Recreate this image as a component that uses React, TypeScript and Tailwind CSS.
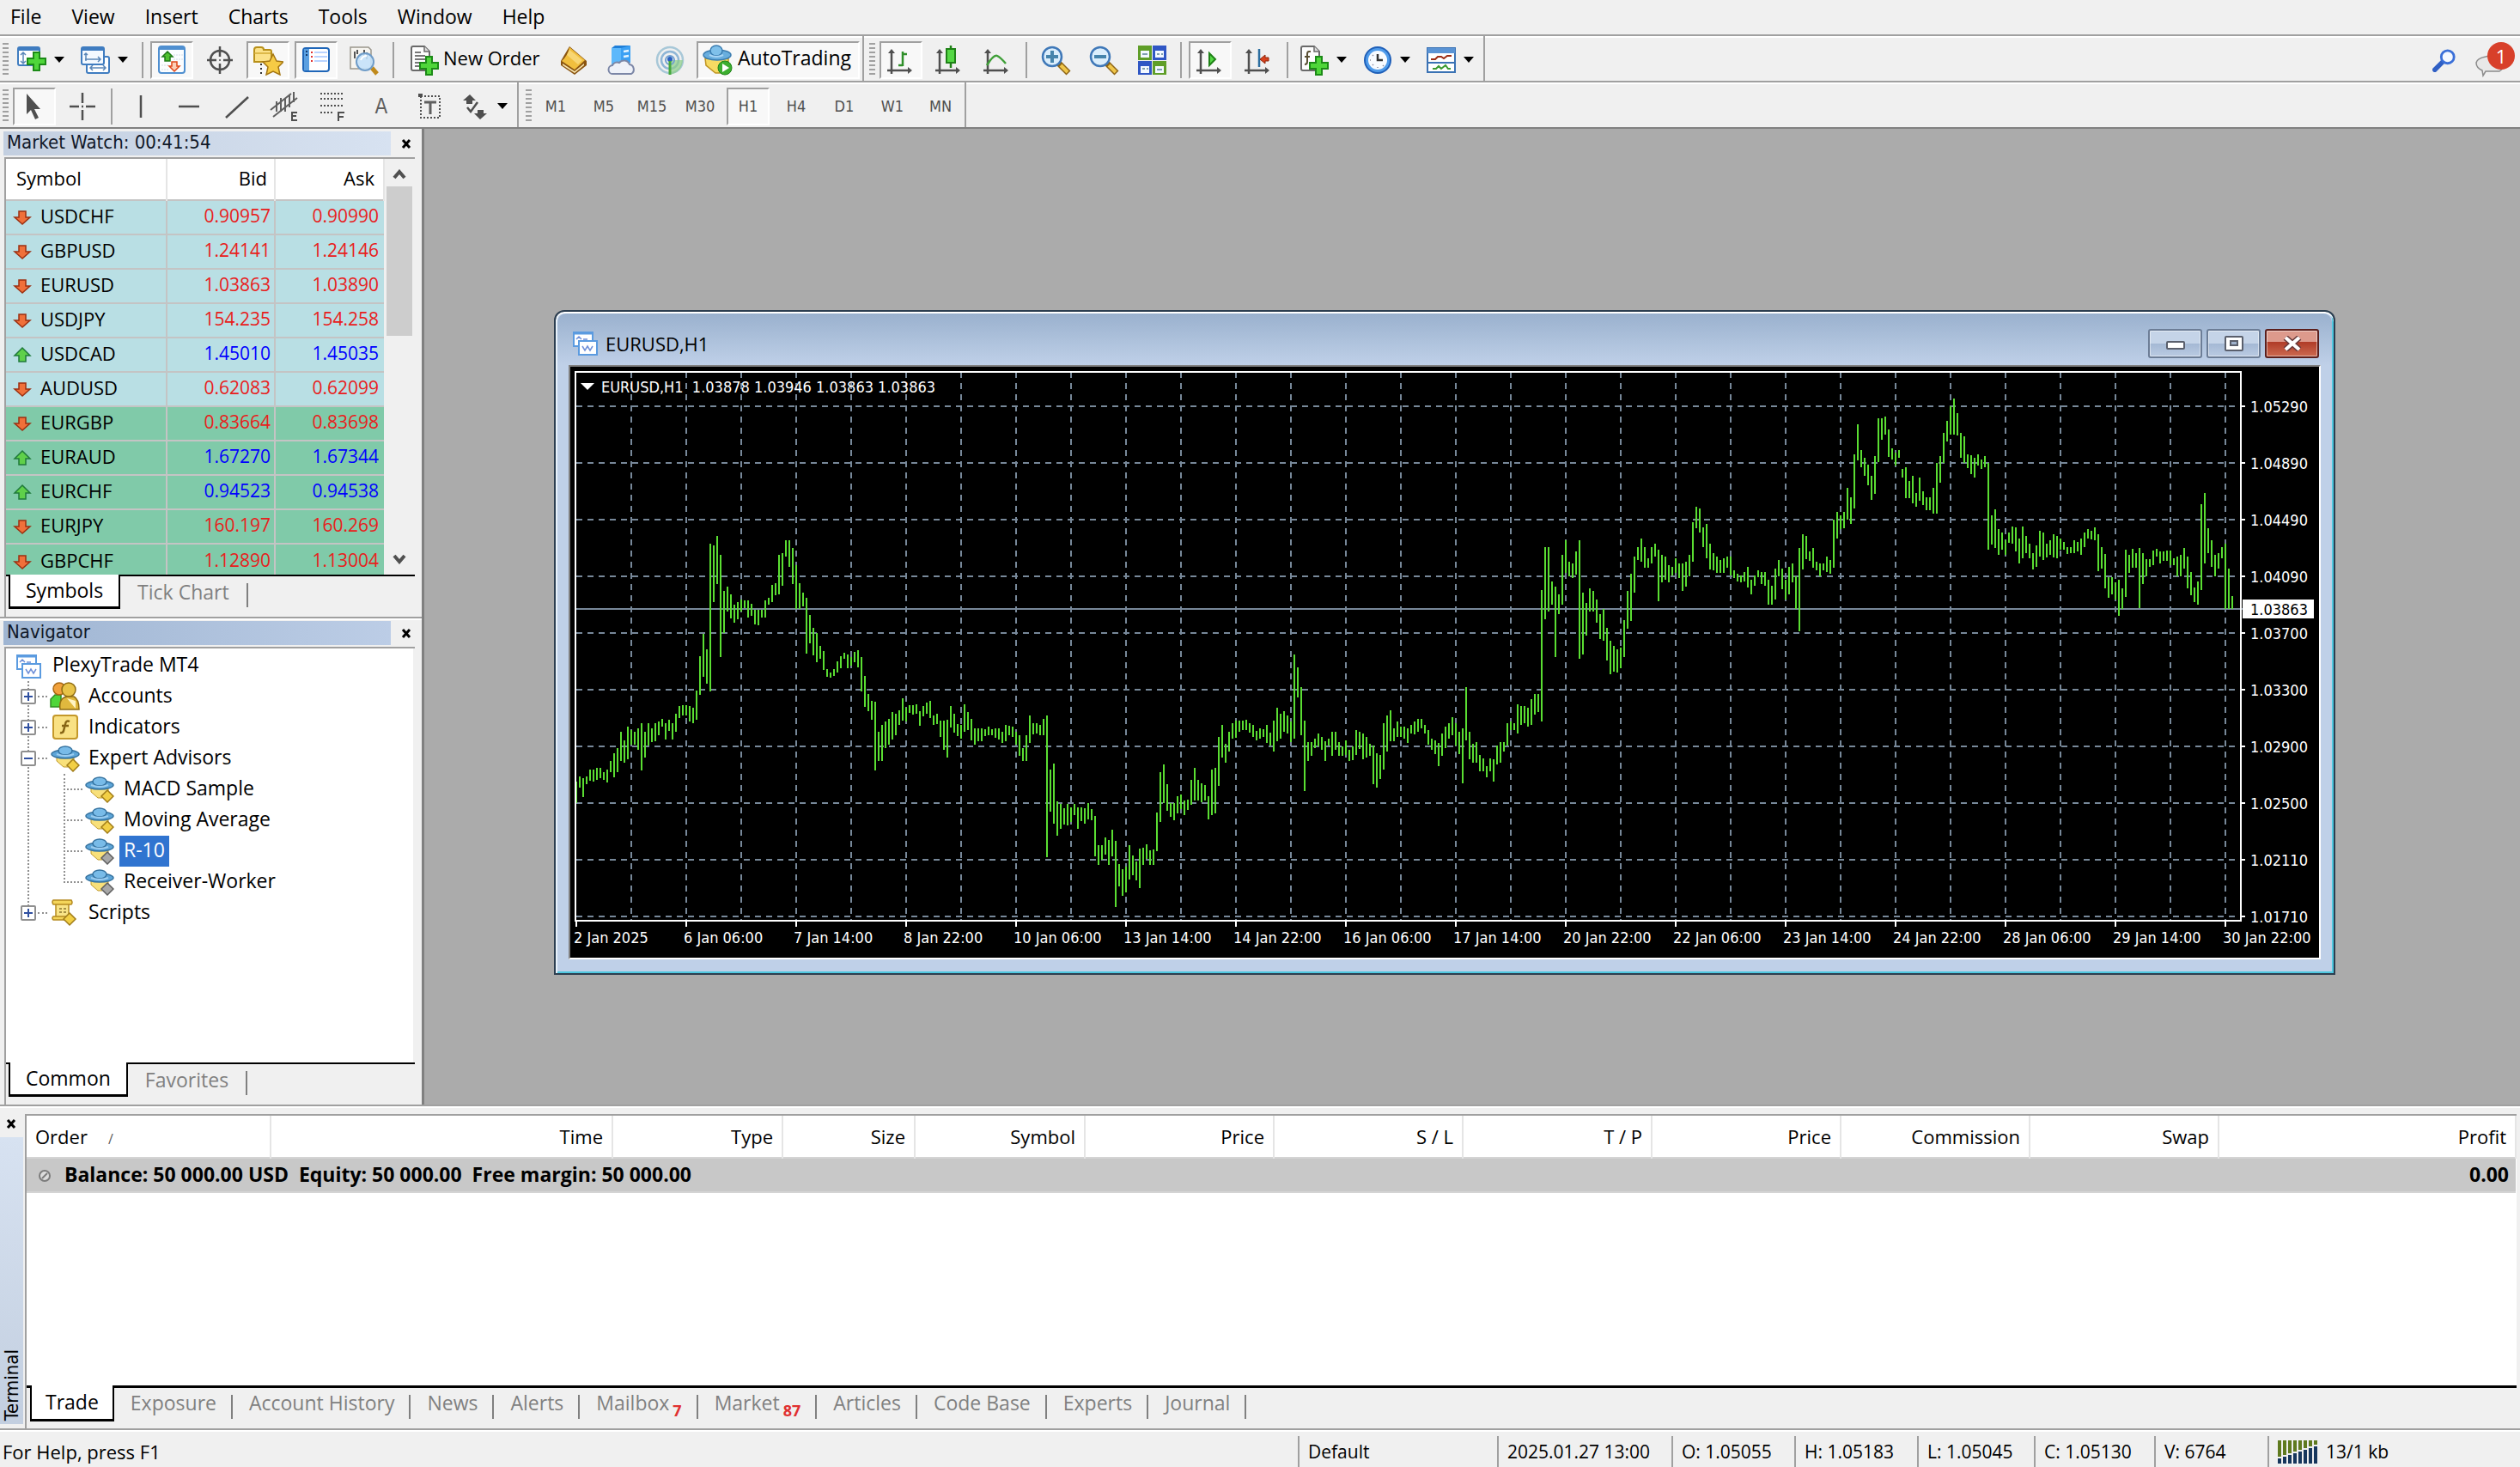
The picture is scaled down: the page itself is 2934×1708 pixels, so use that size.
import type { ReactNode } from "react";

const ui = "font-['Open_Sans','Noto_Sans',sans-serif]";
const small = "font-['DejaVu_Sans_Condensed','Noto_Sans',sans-serif]";

/* ---------- data ---------- */

const menu = ["File", "View", "Insert", "Charts", "Tools", "Window", "Help"];

const timeframes = ["M1", "M5", "M15", "M30", "H1", "H4", "D1", "W1", "MN"];

const symbols = [
  { name: "USDCHF", bid: "0.90957", ask: "0.90990", up: false, major: true },
  { name: "GBPUSD", bid: "1.24141", ask: "1.24146", up: false, major: true },
  { name: "EURUSD", bid: "1.03863", ask: "1.03890", up: false, major: true },
  { name: "USDJPY", bid: "154.235", ask: "154.258", up: false, major: true },
  { name: "USDCAD", bid: "1.45010", ask: "1.45035", up: true, major: true },
  { name: "AUDUSD", bid: "0.62083", ask: "0.62099", up: false, major: true },
  { name: "EURGBP", bid: "0.83664", ask: "0.83698", up: false, major: false },
  { name: "EURAUD", bid: "1.67270", ask: "1.67344", up: true, major: false },
  { name: "EURCHF", bid: "0.94523", ask: "0.94538", up: true, major: false },
  { name: "EURJPY", bid: "160.197", ask: "160.269", up: false, major: false },
  { name: "GBPCHF", bid: "1.12890", ask: "1.13004", up: false, major: false },
];

const orderColumns = [
  { label: "Order", width: "w-[284px]" },
  { label: "Time", width: "w-[398px]" },
  { label: "Type", width: "w-[198px]" },
  { label: "Size", width: "w-[154px]" },
  { label: "Symbol", width: "w-[198px]" },
  { label: "Price", width: "w-[220px]" },
  { label: "S / L", width: "w-[220px]" },
  { label: "T / P", width: "w-[220px]" },
  { label: "Price", width: "w-[220px]" },
  { label: "Commission", width: "w-[220px]" },
  { label: "Swap", width: "w-[220px]" },
  { label: "Profit", width: "" },
];

const terminalTabs = [
  { label: "Exposure" },
  { label: "Account History" },
  { label: "News" },
  { label: "Alerts" },
  { label: "Mailbox", count: "7" },
  { label: "Market", count: "87" },
  { label: "Articles" },
  { label: "Code Base" },
  { label: "Experts" },
  { label: "Journal" },
];

const status = [
  { label: "Default", width: "w-[232px]" },
  { label: "2025.01.27 13:00", width: "w-[203px]" },
  { label: "O: 1.05055", width: "w-[143px]" },
  { label: "H: 1.05183", width: "w-[143px]" },
  { label: "L: 1.05045", width: "w-[136px]" },
  { label: "C: 1.05130", width: "w-[140px]" },
  { label: "V: 6764", width: "w-[132px]" },
];

const prices = [
  "1.05290", "1.04890", "1.04490", "1.04090", "1.03700",
  "1.03300", "1.02900", "1.02500", "1.02110", "1.01710",
];

const dates = [
  "2 Jan 2025", "6 Jan 06:00", "7 Jan 14:00", "8 Jan 22:00",
  "10 Jan 06:00", "13 Jan 14:00", "14 Jan 22:00", "16 Jan 06:00",
  "17 Jan 14:00", "20 Jan 22:00", "22 Jan 06:00", "23 Jan 14:00",
  "24 Jan 22:00", "28 Jan 06:00", "29 Jan 14:00", "30 Jan 22:00",
];

const TICKS_PER_PX = 1.96;
const bars = `
1096-1145 1084-1110 1088-1130 1084-1102 1068-1094 1068-1096 1064-1092 1064-1088 1074-1092 1068-1098
1048-1074 1030-1086 1020-1074 982-1048 1002-1052 970-1044 978-1012 982-1012 974-1024 962-1070
982-1040 962-1014 974-1006 962-1004 958-990 952-970 962-1000 954-980 962-1000 940-982
924-950 922-944 922-944 924-958 928-962 888-954 810-898 758-856 794-872 552-890
556-686 536-644 578-812 660-756 650-708 668-724 692-734 686-726 680-708 682-700
682-722 690-718 704-736 704-738 704-722 682-722 676-692 646-686 642-670 578-668
574-648 544-582 544-606 562-644 602-702 642-702 664-696 676-804 716-780 744-808
756-824 786-816 798-840 838-856 846-858 838-854 822-846 810-836 802-816 806-836
812-832 800-824 796-834 812-890 854-926 896-934 912-954 914-1070 982-1048 966-1048
958-1020 952-1012 936-1000 940-990 932-966 906-956 928-958 922-938 922-942 920-940
934-968 924-946 916-940 912-950 944-966 940-964 956-994 956-1024 954-1040 924-972
940-984 964-992 966-998 920-982 936-978 952-1002 974-1012 974-1004 974-1004 976-992
970-990 976-990 974-996 974-1000 982-1008 966-1004 968-990 970-994 982-1012 990-1036
1020-1048 990-1048 944-1008 962-988 962-986 966-990 952-990 944-1268 1068-1164 1054-1192
1140-1220 1146-1204 1156-1194 1146-1196 1154-1188 1146-1172 1154-1204 1154-1186 1156-1192 1144-1182
1158-1184 1174-1266 1240-1286 1240-1274 1224-1262 1228-1286 1206-1266 1230-1382 1284-1334 1296-1356
1290-1348 1240-1320 1264-1310 1278-1322 1248-1338 1246-1286 1238-1272 1252-1286 1250-1286 1166-1254
1074-1188 1056-1144 1102-1162 1144-1176 1144-1184 1128-1168 1126-1158 1138-1172 1136-1160 1092-1148
1064-1138 1092-1138 1100-1142 1104-1138 1128-1182 1068-1172 1064-1168 994-1106 966-1040 1010-1052
982-1028 962-998 956-996 956-982 956-978 954-978 962-984 966-994 980-1002 974-998
976-994 966-1008 984-1014 956-1028 928-1004 940-998 934-982 944-986 958-1006 806-998
834-904 880-990 956-1118 1006-1048 1006-1036 998-1020 986-1016 994-1024 1004-1048 998-1014
982-1036 982-1024 1006-1036 1016-1036 1002-1034 1024-1048 1016-1046 978-1034 982-1022 986-1044
994-1040 1010-1036 1014-1102 1030-1110 1034-1090 962-1068 944-1028 932-1004 974-1004 958-994
970-994 970-998 974-1008 966-986 958-988 952-982 952-974 966-986 978-1012 998-1024
1002-1032 1008-1060 986-1036 970-1020 962-998 948-990 962-1014 982-1032 974-1100 880-1002
982-1044 1010-1052 1006-1052 1034-1072 1042-1072 1060-1086 1042-1072 1044-1096 1014-1056 1006-1052
1006-1028 962-1014 958-978 962-978 920-986 924-966 924-962 928-970 908-966 896-942
896-936 658-958 560-726 560-708 638-692 650-812 668-714 578-692 544-620 594-628
598-632 570-624 544-816 664-806 688-762 654-708 660-708 680-734 714-770 702-774
744-820 774-850 786-844 794-846 790-836 728-812 660-746 622-730 582-664 560-590
540-594 560-608 586-608 560-598 552-582 566-684 578-640 582-636 602-640 606-626
586-620 598-632 598-660 594-650 578-628 504-594 468-518 472-528 516-560 508-586
552-612 574-614 582-620 590-620 586-620 582-608 582-626 614-632 622-638 626-640
618-638 606-652 636-668 626-648 614-630 618-644 618-648 636-692 648-692 610-680
590-628 610-656 636-680 606-668 598-640 628-702 562-752 532-612 536-588 570-592
562-608 594-614 598-628 598-614 582-618 590-622 498-608 480-540 488-520 480-518
426-498 446-508 348-472 280-362 340-378 356-398 372-420 398-452 352-440 266-366
266-316 262-304 292-354 336-360 344-374 340-356 382-402 378-448 410-448 398-460
438-468 402-454 434-464 446-476 446-476 426-484 368-484 352-414 300-368 272-320
240-304 222-304 254-306 300-356 308-368 348-380 350-394 356-402 348-374 360-382
352-378 368-566 488-554 474-562 520-578 528-566 544-578 528-550 514-552 516-570
540-598 514-586 536-574 552-586 574-612 556-606 524-582 528-590 552-584 544-578
532-584 536-586 540-566 548-566 560-576 560-574 544-574 548-570 540-578 528-560
520-540 524-542 516-544 532-616 560-610 576-654 630-676 630-668 640-680 636-718
654-702 566-674 578-620 564-608 574-608 562-700 574-644 588-628 588-606 568-602
564-582 570-598 570-592 568-592 568-602 586-602 582-628 578-628 562-610 582-654
618-670 652-686 638-692 462-658 438-598 518-574 544-606 578-628 574-610 560-586
552-702 610-702 672-702`
  .trim()
  .split(/\s+/)
  .map((bar) => bar.split("-").map((v) => Math.round(Number(v) / TICKS_PER_PX - 76)));

/* ---------- icons ---------- */

const Icon = ({ children }: { children: ReactNode }) => (
  <svg width="36" height="36" viewBox="0 0 36 36" fill="none" aria-hidden="true">
    {children}
  </svg>
);

const Plus = ({ x, y }: { x: number; y: number }) => (
  <path
    transform={`translate(${x} ${y})`}
    d="M8 1h7v7h7v7h-7v7H8v-7H1V8h7z"
    fill="#4fd63a"
    stroke="#1c8a17"
    strokeWidth="2"
  />
);

const NewChartIcon = () => (
  <Icon>
    <rect x="2" y="3" width="25" height="21" rx="2" fill="#fff" stroke="#3f7cc0" strokeWidth="2" />
    <path d="M2 3h25v4H2z" fill="#3f7cc0" />
    <path d="M8 10v11M5 12l3-3 3 3M5 19l3 3 3-3M13 20h6" stroke="#5b87b8" strokeWidth="1.5" />
    <Plus x={12} y={8} />
  </Icon>
);

const ProfilesIcon = () => (
  <Icon>
    <rect x="8" y="14" width="26" height="19" rx="2" fill="#fff" stroke="#3f7cc0" strokeWidth="2" />
    <path d="M12 27h18M15 24l-3 3 3 3M27 24l3 3-3 3" stroke="#5b87b8" strokeWidth="1.5" />
    <rect x="2" y="3" width="26" height="20" rx="2" fill="#f4f9ff" stroke="#3f7cc0" strokeWidth="2" />
    <path d="M2 3h26v4H2z" fill="#3f7cc0" />
    <path d="M7 10v9M6 17h18M21 14l3 3-3 3M5 12l2-2 2 2" stroke="#5b87b8" strokeWidth="1.5" />
  </Icon>
);

const MarketWatchIcon = () => (
  <Icon>
    <rect x="3" y="2" width="30" height="31" rx="3" fill="#fbfdff" stroke="#4f8fd0" strokeWidth="2" />
    <path d="M4 3h28v3H4z" fill="#4f8fd0" />
    <path d="M20 12h11M20 17h11M6 24h9M6 29h9" stroke="#d5dce6" strokeWidth="1" strokeDasharray="2 1" />
    <path d="M13 8l6 6h-3v5h-6v-5H7z" fill="#4fc02f" stroke="#1f7a17" strokeWidth="1.5" />
    <path d="M21 31l6-6h-3v-5h-6v5h-3z" fill="#fbd0b8" stroke="#e0481a" strokeWidth="1.5" />
  </Icon>
);

const DataWindowIcon = () => (
  <Icon>
    <circle cx="18" cy="18" r="11" stroke="#4f4f4f" strokeWidth="2.5" />
    <path d="M18 2v12M18 22v12M3 18h11M22 18h11" stroke="#4f4f4f" strokeWidth="2.5" />
    <circle cx="18" cy="18" r="1" fill="#4f4f4f" />
  </Icon>
);

const FavoritesIcon = () => (
  <Icon>
    <path d="M2 20V6q0-3 3-3h5q3 0 3 3h7q2 0 2 2v12z" fill="#fbe289" stroke="#b8901a" strokeWidth="2" />
    <path d="M2 10h19" stroke="#d2ab35" strokeWidth="1.5" />
    <path d="M10 22v12" stroke="#333" strokeWidth="2" strokeDasharray="2 3" />
    <path d="M24 11l4 8 8 1-6 6 2 9-8-4-8 4 2-9-6-6 8-1z" fill="#f6cb45" stroke="#a47612" strokeWidth="1.5" />
  </Icon>
);

const NavigatorIcon = () => (
  <Icon>
    <rect x="3" y="4" width="30" height="27" rx="3" fill="#fff" stroke="#1f66b8" strokeWidth="2" />
    <path d="M4 5h6v25H4z" fill="#5a9fe0" />
    <path d="M6 8h2M6 12h2" stroke="#123a70" strokeWidth="2" />
    <path d="M13 8v13" stroke="#e03030" strokeWidth="2" strokeDasharray="2 3" />
    <path d="M16 9h15M16 14h15M16 19h15" stroke="#b9d3ff" strokeWidth="2" />
  </Icon>
);

const TesterIcon = () => (
  <Icon>
    <path d="M2 3h21l3 3v22H2z" fill="#f7f5f0" stroke="#9a968c" strokeWidth="1.5" />
    <path d="M7 8v8M10 6v5M18 6v7M21 9v8" stroke="#555" strokeWidth="2" />
    <path d="M27 27l6 7" stroke="#c08a1c" strokeWidth="5" />
    <circle cx="19" cy="20" r="10" fill="#c4e2fa" fillOpacity=".9" stroke="#6f9cc8" strokeWidth="2" />
    <path d="M14 18q2-5 7-5" stroke="#fff" strokeWidth="2" />
  </Icon>
);

const NewOrderIcon = () => (
  <Icon>
    <path d="M3 4q0-2 2-2h13l6 6v20q0 2-2 2H5q-2 0-2-2z" fill="#fdfdfd" stroke="#6a6a6a" strokeWidth="2" />
    <path d="M18 2v6h6" fill="#ddd" stroke="#6a6a6a" strokeWidth="1.5" />
    <path d="M7 9h7M7 13h12M7 17h12M7 21h6M7 25h5" stroke="#777" strokeWidth="2" />
    <Plus x={12} y={13} />
  </Icon>
);

const BookIcon = () => (
  <Icon>
    <path d="M13 2l20 17v5L19 35 3 24v-5z" fill="#8a5410" />
    <path d="M13 3l18 15-12 11L4 19q7-6 9-16z" fill="#f1bf3e" />
    <path d="M13 6l15 12-5 5L10 12z" fill="#fbe08a" opacity=".7" />
    <path d="M5 22l14 9 11-9v2L19 33 5 24z" fill="#f8e6b0" />
  </Icon>
);

const VpsIcon = () => (
  <Icon>
    <path d="M6 4l4-3h18l-3 3v20H6z" fill="#1f7fd8" />
    <path d="M6 4h11v20H6z" fill="#5cb8fb" />
    <path d="M17 4l11-3v20l-11 3z" fill="#3ba0f4" />
    <path d="M20 8l6-1M20 14l6-1" stroke="#e4f4ff" strokeWidth="2.5" />
    <path
      d="M8 34a5 5 0 0 1-1-10 6 6 0 0 1 8-3 7 7 0 0 1 12 2 6 6 0 0 1 2 11z"
      fill="#eef1f8"
      stroke="#7b86a6"
      strokeWidth="2"
    />
  </Icon>
);

const SignalIcon = () => (
  <Icon>
    <circle cx="18" cy="18" r="15" stroke="#a8c8d8" strokeWidth="2.5" />
    <circle cx="18" cy="18" r="10" stroke="#8fb6d6" strokeWidth="2.5" />
    <path d="M18 18V35Q32 32 33 18z" fill="#8dcf87" opacity=".7" />
    <circle cx="18" cy="18" r="5" stroke="#6f9fd0" strokeWidth="2" />
    <circle cx="18" cy="17" r="3" fill="#2a5fc0" />
    <path d="M18 19v16" stroke="#45a83c" strokeWidth="3" />
  </Icon>
);

const AutoTradingIcon = () => (
  <Icon>
    <path d="M4 16h27v8l-10 9h-5L5 24z" fill="#f6da63" stroke="#bf9422" strokeWidth="1.5" />
    <ellipse cx="18" cy="12" rx="16" ry="6" fill="#69aede" stroke="#3a7cb0" strokeWidth="1.5" />
    <ellipse cx="17" cy="7" rx="7" ry="6" fill="#7fc0ea" stroke="#3a7cb0" strokeWidth="1.5" />
    <path d="M9 12q8 4 16 0" stroke="#a8d5f5" strokeWidth="2" />
    <circle cx="27" cy="27" r="8" fill="#3cae2f" stroke="#1f8217" strokeWidth="1" />
    <path d="M24 22l8 5-8 5z" fill="#fff" />
  </Icon>
);

const Axes = () => (
  <>
    <path d="M7 7v27M2 30h27" stroke="#4f4f4f" strokeWidth="2.5" />
    <path d="M3 10l4-5 4 5zM26 26l5 4-5 4z" fill="#4f4f4f" />
  </>
);

const BarChartIcon = () => (
  <Icon>
    <Axes />
    <path d="M20 8v17M20 11h5M15 24h5" stroke="#2f8f2a" strokeWidth="2.5" />
  </Icon>
);

const CandleIcon = () => (
  <Icon>
    <Axes />
    <path d="M20 1v26" stroke="#1f8217" strokeWidth="2.5" />
    <rect x="15" y="5" width="10" height="16" fill="#55d845" stroke="#1f8217" strokeWidth="2" />
  </Icon>
);

const LineIcon = () => (
  <Icon>
    <Axes />
    <path d="M6 24Q14 11 18 13t10 9" stroke="#3f9f38" strokeWidth="2.5" />
  </Icon>
);

const Zoom = ({ plus }: { plus?: boolean }) => (
  <Icon>
    <path d="M22 22l11 11" stroke="#8d6415" strokeWidth="7" />
    <path d="M24 24l8 8" stroke="#f0c64a" strokeWidth="4" />
    <circle cx="14" cy="14" r="11" fill="#dbeefc" stroke="#3f78b8" strokeWidth="2.5" />
    <path d={plus ? "M14 7v14M7 14h14" : "M7 14h14"} stroke="#4684ac" strokeWidth="4" />
  </Icon>
);

const TileIcon = () => (
  <Icon>
    <path d="M2 1h16v17H2zM19 19h16v16H19z" fill="#5f9e28" />
    <path d="M19 1h16v17H19zM2 19h16v16H2z" fill="#2f56c4" />
    <path d="M5 7h10v8H5zM22 7h10v8H22zM5 25h10v8H5zM22 25h10v8H22z" fill="#f4f9ff" />
    <path d="M7 11h6M24 11h3M29 11h2M7 28h3M12 28h2M24 29h6" stroke="#7f9fb0" strokeWidth="2" />
  </Icon>
);

const AutoScrollIcon = () => (
  <Icon>
    <Axes />
    <path d="M17 10l7 7-7 7z" fill="#55d845" stroke="#1f8217" strokeWidth="2" />
  </Icon>
);

const ShiftIcon = () => (
  <Icon>
    <Axes />
    <path d="M19 5v21" stroke="#2c6ea0" strokeWidth="2.5" />
    <path d="M20 17l6-5v3h4v4h-4v3z" fill="#d8401c" stroke="#8c2408" strokeWidth="1" />
  </Icon>
);

const IndicatorsIcon = () => (
  <Icon>
    <path d="M3 4q0-2 2-2h13l6 6v20q0 2-2 2H5q-2 0-2-2z" fill="#fdfdfd" stroke="#6a6a6a" strokeWidth="2" />
    <path d="M18 2v6h6" fill="#ddd" stroke="#6a6a6a" strokeWidth="1.5" />
    <path d="M14 8h-2q-2 0-2 3v9q0 3-3 3M7 14h6" stroke="#5a5034" strokeWidth="2" />
    <Plus x={12} y={13} />
  </Icon>
);

const ClockIcon = () => (
  <Icon>
    <circle cx="18" cy="18" r="16" fill="#1f5fb8" />
    <circle cx="18" cy="18" r="14" fill="#4f9bea" />
    <circle cx="18" cy="18" r="11" fill="#f8fbff" />
    <path d="M18 11v7h6" stroke="#333" strokeWidth="2.5" />
    <path d="M18 26v1M10 18H9M12 12l1 1M24 24l1 1M12 24l1-1" stroke="#889" strokeWidth="1.5" />
  </Icon>
);

const TemplateIcon = () => (
  <Icon>
    <rect x="2" y="4" width="32" height="28" fill="#fff" stroke="#3a72b4" strokeWidth="2" />
    <path d="M2 4h32v6H2z" fill="#5a93d4" />
    <path d="M3 21h30" stroke="#3a72b4" strokeWidth="2" />
    <path d="M6 17h5l3-3h4l3 2 4-3h5" stroke="#9c2c14" strokeWidth="2" />
    <path d="M8 28h4l3-3 3 3 5-4 3 4h3" stroke="#3a9a30" strokeWidth="2" />
  </Icon>
);

const CursorIcon = () => (
  <Icon>
    <path d="M9 3v24l5-5 5 11 4-2-5-10h7z" fill="#4f4f4f" />
  </Icon>
);

const CrosshairIcon = () => (
  <Icon>
    <path d="M18 2v12M18 22v12M3 18h11M22 18h11M17 18h2" stroke="#4f4f4f" strokeWidth="2.5" />
  </Icon>
);

const VLineIcon = () => (
  <Icon>
    <path d="M18 5v26" stroke="#4f4f4f" strokeWidth="2.5" />
  </Icon>
);

const HLineIcon = () => (
  <Icon>
    <path d="M6 18h24" stroke="#4f4f4f" strokeWidth="2.5" />
  </Icon>
);

const TrendIcon = () => (
  <Icon>
    <path d="M5 31L31 7" stroke="#4f4f4f" strokeWidth="2.5" />
  </Icon>
);

const ChannelIcon = () => (
  <Icon>
    <path d="M1 22L25 3M4 30L32 8M8 12v12M13 8v16M18 8v16M23 5v14M28 1v12" stroke="#5f5f5f" strokeWidth="2" />
    <path d="M32 25h-6v9h6M26 29h5" stroke="#4f4f4f" strokeWidth="2" />
  </Icon>
);

const FiboIcon = () => (
  <Icon>
    <path d="M3 3h26M3 9h26M3 17h26M3 25h16" stroke="#4f4f4f" strokeWidth="2" strokeDasharray="2 2" />
    <path d="M31 25h-7v10M24 30h6" stroke="#4f4f4f" strokeWidth="2" />
  </Icon>
);

const LabelIcon = () => (
  <Icon>
    <rect x="8" y="6" width="22" height="25" stroke="#4f4f4f" strokeWidth="2" strokeDasharray="2 2" />
    <path d="M5 3h5v4H5z" fill="#4f4f4f" />
    <path d="M12 13h14M19 13v14" stroke="#5f5f5f" strokeWidth="3" />
  </Icon>
);

const ArrowsIcon = () => (
  <Icon>
    <path d="M4 11l8-7 7 7h-4v4H8v-4zM17 26l7 7 8-7h-4v-4h-7v4z" fill="#4f4f4f" />
    <path d="M9 19l4 5 8-11" stroke="#4f4f4f" strokeWidth="2.5" />
  </Icon>
);

const ChartWindowIcon = () => (
  <svg width="30" height="28" viewBox="0 0 30 28" fill="none" aria-hidden="true">
    <rect x="1" y="1" width="22" height="16" fill="#fff" stroke="#5b9be0" strokeWidth="2" />
    <path d="M1 2h22" stroke="#5b9be0" strokeWidth="3" />
    <path d="M4 9l3-3 3 3M12 9h5" stroke="#6f8fd8" strokeWidth="1.5" />
    <rect x="7" y="11" width="21" height="16" fill="#fff" stroke="#5b9be0" strokeWidth="2" />
    <path d="M11 17l3 5 3-5 3 5 3-5" stroke="#6f8fd8" strokeWidth="1.5" />
  </svg>
);

const ExpertIcon = ({ color = "#f2cf45", edge = "#a07c18" }) => (
  <svg width="34" height="32" viewBox="0 0 34 32" fill="none" aria-hidden="true">
    <path d="M7 13h20v6l-7 7h-5l-8-7z" fill="#f8e07a" stroke="#c09a2c" strokeWidth="1" />
    <ellipse cx="17" cy="11" rx="16" ry="5" fill="#5da5d8" stroke="#35729f" strokeWidth="1.5" />
    <ellipse cx="17" cy="7" rx="8" ry="5" fill="#78bbe8" stroke="#35729f" strokeWidth="1.5" />
    <path d="M7 11q10 4 20 0" stroke="#9ccdf0" strokeWidth="2" />
    <path d="M26 17l7 7-7 7-7-7z" fill={color} stroke={edge} strokeWidth="1.5" />
  </svg>
);

const AccountsIcon = () => (
  <svg width="36" height="34" viewBox="0 0 36 34" fill="none" aria-hidden="true">
    <path d="M1 29V20l5-5h7v14z" fill="#4fd63a" stroke="#2f8f22" strokeWidth="1.5" />
    <circle cx="11" cy="8" r="7" fill="#f1a13c" stroke="#a86712" strokeWidth="1.5" />
    <circle cx="22" cy="9" r="8" fill="#e8c348" stroke="#8f6c12" strokeWidth="1.5" />
    <path d="M12 32q-2-13 8-15h8q6 3 6 15z" fill="#e0b83e" stroke="#8f6c12" strokeWidth="1.5" />
    <path d="M20 19l10 12v-9z" fill="#fff4c4" />
  </svg>
);

const FunctionIcon = () => (
  <svg width="32" height="30" viewBox="0 0 32 30" fill="none" aria-hidden="true">
    <rect x="2" y="1" width="28" height="27" rx="3" fill="#f9e184" stroke="#c4982a" strokeWidth="2" />
    <path d="M21 8q-4-2-5 3l-2 8q-1 3-4 2M12 13h8" stroke="#866414" strokeWidth="2.5" />
  </svg>
);

const ScriptIcon = () => (
  <svg width="34" height="32" viewBox="0 0 34 32" fill="none" aria-hidden="true">
    <path d="M6 5h15v16H6z" fill="#f9e487" stroke="#b58b20" strokeWidth="1.5" />
    <path d="M3 1h21q2 3 0 5H3q-2-3 0-5zM3 20h17v4H3q-2-2 0-4z" fill="#f4d55a" stroke="#b58b20" strokeWidth="1.5" />
    <path d="M10 11h3M15 11h3M10 15h3M15 15h3" stroke="#8a7430" strokeWidth="1.5" />
    <path d="M22 16l7 7-7 7-7-7z" fill="#f2cf45" stroke="#a07c18" strokeWidth="1.5" />
  </svg>
);

const DirectionIcon = ({ up }: { up: boolean }) => (
  <svg width="22" height="20" viewBox="0 0 22 20" aria-hidden="true">
    {up ? (
      <path d="M11 2l9 9h-5v7H7v-7H2z" fill="#5fd04a" stroke="#1f7a3a" strokeWidth="1.5" />
    ) : (
      <path d="M11 18L2 10h5V3h8v7h5z" fill="#f0703a" stroke="#9c2f10" strokeWidth="1.5" />
    )}
  </svg>
);

/* ---------- toolbar parts ---------- */

const Grip = () => (
  <div className="w-[7px] h-10 bg-[repeating-linear-gradient(180deg,#a0a0a0_0_2px,#f0f0f0_2px_5px)]" />
);

const Separator = () => <div className="w-[2px] h-[42px] mx-[5px] bg-[#a0a0a0]" />;

const pressedLook =
  "border-2 border-t-[#a0a0a0] border-l-[#a0a0a0] border-b-white border-r-white bg-[#f8f8f8]";

type ToolProps = { label: string; children: ReactNode; pressed?: boolean };

const Tool = ({ label, children, pressed = false }: ToolProps) => (
  <button
    aria-label={label}
    aria-pressed={pressed}
    className={`w-[50px] h-11 mx-[3px] flex items-center justify-center shrink-0 ${
      pressed ? pressedLook : ""
    }`}
  >
    {children}
  </button>
);

const Caret = () => (
  <svg width="12" height="7" viewBox="0 0 12 7" aria-hidden="true">
    <path d="M0 0h12L6 7z" fill="#000" />
  </svg>
);

const SplitTool = ({ label, children }: ToolProps) => (
  <button aria-label={label} className="w-[74px] h-11 pl-[7px] flex items-center gap-2 shrink-0">
    {children}
    <Caret />
  </button>
);

const Toolbars = () => (
  <>
    <div className="flex items-stretch h-[54px] border-t-2 border-[#a0a0a0] shadow-[inset_0_2px_0_#fff]">
      <div className="flex items-center pl-[3px] pt-[3px] border-r-2 border-[#a0a0a0]">
        <Grip />
        <div className="w-[2px]" />
        <SplitTool label="New chart"><NewChartIcon /></SplitTool>
        <SplitTool label="Profiles"><ProfilesIcon /></SplitTool>
        <Separator />
        <Tool label="Market Watch" pressed><MarketWatchIcon /></Tool>
        <Tool label="Data Window"><DataWindowIcon /></Tool>
        <Tool label="Favorites" pressed><FavoritesIcon /></Tool>
        <Tool label="Navigator" pressed><NavigatorIcon /></Tool>
        <Tool label="Strategy Tester"><TesterIcon /></Tool>
        <Separator />
        <button className="flex items-center gap-1 w-[176px] h-11 pl-3 text-[22px] whitespace-nowrap">
          <NewOrderIcon />
          <span className="pb-1">New Order</span>
        </button>
        <Tool label="MetaEditor"><BookIcon /></Tool>
        <Tool label="VPS"><VpsIcon /></Tool>
        <Tool label="Signals"><SignalIcon /></Tool>
        <button
          aria-pressed="true"
          className={`flex items-center gap-[6px] w-[190px] h-11 mx-[3px] pl-1 text-[23px] whitespace-nowrap ${pressedLook}`}
        >
          <AutoTradingIcon />
          <span className="pb-1">AutoTrading</span>
        </button>
      </div>
      <div className="flex items-center pl-[6px] pt-[3px] border-r-2 border-[#a0a0a0]">
        <Grip />
        <div className="w-[2px]" />
        <Tool label="Bar chart" pressed><BarChartIcon /></Tool>
        <Tool label="Candlesticks"><CandleIcon /></Tool>
        <Tool label="Line chart"><LineIcon /></Tool>
        <Separator />
        <Tool label="Zoom in"><Zoom plus /></Tool>
        <Tool label="Zoom out"><Zoom /></Tool>
        <Tool label="Tile windows"><TileIcon /></Tool>
        <Separator />
        <Tool label="Auto scroll" pressed><AutoScrollIcon /></Tool>
        <Tool label="Chart shift"><ShiftIcon /></Tool>
        <Separator />
        <SplitTool label="Indicators"><IndicatorsIcon /></SplitTool>
        <SplitTool label="Periods"><ClockIcon /></SplitTool>
        <SplitTool label="Templates"><TemplateIcon /></SplitTool>
      </div>
      <div className="flex-1 flex items-center justify-end gap-5 pt-1 pr-[6px]">
        <button aria-label="Search">
          <svg width="28" height="28" viewBox="0 0 30 30" fill="none">
            <path d="M3 27L13 17" stroke="#2f5fc4" strokeWidth="6" strokeLinecap="round" />
            <circle cx="19" cy="11" r="8" fill="#f4f8ff" stroke="#3a6fd8" strokeWidth="3" />
          </svg>
        </button>
        <button aria-label="Notifications" className="relative w-12 h-[42px]">
          <svg width="48" height="42" viewBox="0 0 48 42" fill="none">
            <path d="M14 17q10-4 20 2 6 8-4 15H14l-3 5-1-6q-7-3-7-9 1-5 11-7z" fill="#e8e8e8" stroke="#8c8c8c" strokeWidth="1.5" />
          </svg>
          <span className="absolute top-0 right-0 size-8 rounded-full bg-[#d8402a] text-white text-[22px] leading-8 text-center">
            1
          </span>
        </button>
      </div>
    </div>

    <div className="flex items-stretch h-[54px] border-t-2 border-[#a0a0a0] shadow-[inset_0_2px_0_#fff]">
      <div className="flex items-center pl-[3px] pt-[3px] border-r-2 border-[#a0a0a0]">
        <Grip />
        <div className="w-[2px]" />
        <Tool label="Cursor" pressed><CursorIcon /></Tool>
        <Tool label="Crosshair"><CrosshairIcon /></Tool>
        <Separator />
        <Tool label="Vertical line"><VLineIcon /></Tool>
        <Tool label="Horizontal line"><HLineIcon /></Tool>
        <Tool label="Trendline"><TrendIcon /></Tool>
        <Tool label="Equidistant channel"><ChannelIcon /></Tool>
        <Tool label="Fibonacci retracement"><FiboIcon /></Tool>
        <Tool label="Text">
          <span className={`${small} text-[24px] text-[#5f5f5f]`}>A</span>
        </Tool>
        <Tool label="Text label"><LabelIcon /></Tool>
        <SplitTool label="Arrows"><ArrowsIcon /></SplitTool>
      </div>
      <div className="flex items-center pl-2 pt-[3px] border-r-2 border-[#a0a0a0]">
        <Grip />
        {timeframes.map((tf) => (
          <Tool key={tf} label={tf} pressed={tf === "H1"}>
            <span className={`${small} text-[18px] text-[#4f4f4f]`}>{tf}</span>
          </Tool>
        ))}
      </div>
    </div>
  </>
);

/* ---------- docked panels ---------- */

const CloseMark = () => (
  <svg width="12" height="11" viewBox="0 0 12 11" aria-hidden="true">
    <path d="M2 1l8 9M10 1L2 10" stroke="#000" strokeWidth="3" />
  </svg>
);

const PanelTitle = ({ children, active = false }: { children: ReactNode; active?: boolean }) => (
  <div className="flex items-center h-7 mt-[3px] ml-1">
    <h2
      className={`${small} flex-1 h-7 leading-[26px] pl-1 text-[22px] text-[#101828] bg-gradient-to-r ${
        active ? "from-[#9fb5d2] to-[#bccde6]" : "from-[#c3cfe0] to-[#d7e2f1]"
      }`}
    >
      {children}
    </h2>
    <button aria-label="Close" className="w-[36px] h-7 flex items-center justify-center">
      <CloseMark />
    </button>
  </div>
);

const PanelTabs = ({ tabs }: { tabs: string[] }) => (
  <div role="tablist" className="flex h-[49px] pl-[3px] border-t-2 border-black text-[23px]">
    <button
      role="tab"
      aria-selected="true"
      className="-mt-[2px] h-10 px-[18px] pb-[2px] leading-8 bg-white border-x-2 border-b-[3px] border-black"
    >
      {tabs[0]}
    </button>
    <button role="tab" aria-selected="false" className="h-[38px] px-5 pb-[2px] text-[#808080]">
      {tabs[1]}
    </button>
    <div className="w-[2px] h-7 mt-2 bg-[#808080]" />
  </div>
);

const Chevron = ({ down = false }: { down?: boolean }) => (
  <svg width="16" height="12" viewBox="0 0 16 12" fill="none" aria-hidden="true">
    <path d={down ? "M2 2l6 7 6-7" : "M2 10l6-7 6 7"} stroke="#505050" strokeWidth="4" />
  </svg>
);

const MarketWatch = () => (
  <section className="flex flex-col h-[568px]">
    <PanelTitle>Market Watch: 00:41:54</PanelTitle>
    <div className="flex flex-col flex-1 min-h-0 ml-[5px] mr-2 mt-[2px] border-t-2 border-l-2 border-[#a0a0a0]">
      <div className="flex flex-1 min-h-0 mr-[2px]">
        <div className="flex-1 overflow-hidden">
          <table className="w-full table-fixed border-collapse text-[22px]">
            <thead>
              <tr className="h-12 bg-white leading-8">
                <th className="w-[187px] pl-3 pb-1 text-left font-normal border-r-2 border-[#e5e5e5]">Symbol</th>
                <th className="w-[126px] pr-2 pb-1 text-right font-normal border-r-2 border-[#e5e5e5]">Bid</th>
                <th className="pr-[10px] pb-1 text-right font-normal border-r-2 border-[#e5e5e5]">Ask</th>
              </tr>
            </thead>
            <tbody>
              {symbols.map((s) => (
                <tr
                  key={s.name}
                  className={`h-10 leading-8 border-t-2 border-[#c4c4c4] ${s.major ? "bg-[#b9dfe4]" : "bg-[#80caa9]"}`}
                >
                  <td className="pl-2 border-r-2 border-[#c4c4c4]">
                    <div className="flex items-center gap-[10px]">
                      <DirectionIcon up={s.up} />
                      <span className="pb-1">{s.name}</span>
                    </div>
                  </td>
                  <td className={`pr-1 pb-1 text-[21px] text-right border-r-2 border-[#c4c4c4] ${s.up ? "text-[#0000ff]" : "text-[#e8201c]"}`}>
                    {s.bid}
                  </td>
                  <td className={`pr-[6px] pb-1 text-[21px] text-right ${s.up ? "text-[#0000ff]" : "text-[#e8201c]"}`}>
                    {s.ask}
                  </td>
                </tr>
              ))}
            </tbody>
          </table>
        </div>
        <div className="w-[33px] flex flex-col items-center justify-between py-3 bg-[#f0f0f0]">
          <Chevron />
          <div className="w-[30px] h-[174px] mt-2 bg-[#cdcdcd]" />
          <div className="flex-1" />
          <Chevron down />
        </div>
      </div>
      <PanelTabs tabs={["Symbols", "Tick Chart"]} />
    </div>
  </section>
);

const Expander = ({ open = false }: { open?: boolean }) => (
  <button aria-label={open ? "Collapse" : "Expand"} className="relative">
    <svg width="18" height="18" viewBox="0 0 18 18" fill="none">
      <rect x="1" y="1" width="16" height="16" rx="1" fill="#fff" stroke="#8f8f8f" strokeWidth="2" />
      <path d={open ? "M4 9h10" : "M4 9h10M9 4v10"} stroke="#2f4fa0" strokeWidth="2" />
    </svg>
  </button>
);

const Branch = ({ icon, label, open }: { icon: ReactNode; label: string; open?: boolean }) => (
  <div className="flex items-center h-9">
    <Expander open={open} />
    <div className="w-[11px] mx-[2px] border-t-2 border-dotted border-[#909090]" />
    <div className="w-[37px] flex justify-center">{icon}</div>
    <span className="pl-[9px] pb-1">{label}</span>
  </div>
);

const advisors = [
  { name: "MACD Sample", compiled: true },
  { name: "Moving Average", compiled: true },
  { name: "R-10", compiled: false },
  { name: "Receiver-Worker", compiled: false },
];

const Navigator = () => (
  <section className="flex flex-col flex-1 border-t-2 border-[#a0a0a0] shadow-[inset_0_2px_0_#fff]">
    <PanelTitle active>Navigator</PanelTitle>
    <div className="flex flex-col flex-1 ml-[5px] mr-2 mt-[2px] border-t-2 border-l-2 border-[#a0a0a0]">
      <div className="flex-1 mr-[2px] pt-[3px] bg-white text-[23px]">
        <div className="flex items-center h-[35px] pl-3">
          <ChartWindowIcon />
          <span className="pl-3 pb-1">PlexyTrade MT4</span>
        </div>
        <ul className="relative pl-[17px]">
          <li className="absolute left-[25px] top-0 h-[270px] border-l-2 border-dotted border-[#909090]" />
          <li><Branch icon={<AccountsIcon />} label="Accounts" /></li>
          <li><Branch icon={<FunctionIcon />} label="Indicators" /></li>
          <li>
            <Branch icon={<ExpertIcon />} label="Expert Advisors" open />
            <ul className="relative pl-[50px]">
              <li className="absolute left-[50px] top-0 h-[127px] border-l-2 border-dotted border-[#909090]" />
              {advisors.map((a) => (
                <li key={a.name} className="flex items-center h-9">
                  <div className="w-[22px] mr-[3px] border-t-2 border-dotted border-[#909090]" />
                  {a.compiled ? <ExpertIcon /> : <ExpertIcon color="#a8a8a8" edge="#5f5f5f" />}
                  <span
                    className={`ml-[6px] h-9 px-[5px] leading-[32px] ${
                      a.name === "R-10" ? "bg-[#3074d0] text-white" : ""
                    }`}
                  >
                    {a.name}
                  </span>
                </li>
              ))}
            </ul>
          </li>
          <li><Branch icon={<ScriptIcon />} label="Scripts" /></li>
        </ul>
      </div>
      <PanelTabs tabs={["Common", "Favorites"]} />
    </div>
  </section>
);

/* ---------- chart window ---------- */

const PriceChart = () => (
  <svg
    viewBox="0 0 2036 688"
    className={`${small} block w-full bg-black text-[18px]`}
    role="img"
    aria-label="EURUSD hourly bar chart"
  >
    <g stroke="#778899" strokeWidth="2" strokeDasharray="7 6">
      {prices.map((p, i) => (
        <path key={p} d={`M7 ${46 + i * 66}H1945`} />
      ))}
      {Array.from({ length: 30 }, (_, i) => (
        <path key={i} d={`M${71 + i * 64} 6V645`} />
      ))}
    </g>
    <path d="M6 282H1947" stroke="#778899" strokeWidth="2" />
    <g stroke="#5ade32" strokeWidth="2">
      {bars.map(([high, low], i) => (
        <path key={i} d={`M${7 + i * 4} ${high}V${low}`} />
      ))}
    </g>
    <path d="M6 6H1945V645H6z" fill="none" stroke="#fff" strokeWidth="2" />
    <path d="M12 19h16l-8 8z" fill="#fff" />
    <text x="36" y="30" fill="#fff" className="whitespace-pre">
      {"EURUSD,H1  1.03878 1.03946 1.03863 1.03863"}
    </text>
    {prices.map((p, i) => (
      <g key={p} fill="#fff">
        <path d={`M1945 ${46 + i * 66}h5`} stroke="#fff" strokeWidth="2" />
        <text x="1956" y={53 + i * 66}>{p}</text>
      </g>
    ))}
    {dates.map((d, i) => (
      <g key={d} fill="#fff">
        <path d={`M${7 + i * 128} 645v7`} stroke="#fff" strokeWidth="2" />
        <text x={4 + i * 128} y="671">{d}</text>
      </g>
    ))}
    <rect x="1947" y="271" width="83" height="22" fill="#fff" />
    <text x="1956" y="289" fill="#000">1.03863</text>
  </svg>
);

const captionButton =
  "w-[63px] h-[34px] flex items-center justify-center rounded-[3px] border-2 shadow-[inset_0_0_0_1px_#ffffff80]";

const ChartWindow = () => (
  <section className="absolute left-[151px] top-[211px] w-[2074px] rounded-t-xl border-2 border-[#2c3e50] bg-[#bfd0e8] shadow-[inset_0_2px_0_#fff,inset_2px_0_0_#e8f2fb,inset_-2px_-2px_0_#4fc8e0]">
    <header className="flex items-center h-[60px] m-[2px] mb-0 pl-[18px] pr-[15px] pt-[10px] rounded-t-[10px] bg-gradient-to-b from-[#9ab1ce] to-[#bfd0e8]">
      <ChartWindowIcon />
      <h1 className="flex-1 pl-2 text-[22px]">EURUSD,H1</h1>
      <div className="flex gap-[5px]">
        <button aria-label="Minimize" className={`${captionButton} border-[#6c7d96] bg-[linear-gradient(#c5d4e8_50%,#a4b8d4_50%,#bacbe2)]`}>
          <svg width="22" height="10" viewBox="0 0 22 10" className="mt-1">
            <rect x="1" y="1" width="20" height="8" rx="1" fill="#fff" stroke="#5a5f6c" strokeWidth="2" />
          </svg>
        </button>
        <button aria-label="Maximize" className={`${captionButton} border-[#6c7d96] bg-[linear-gradient(#c5d4e8_50%,#a4b8d4_50%,#bacbe2)]`}>
          <svg width="22" height="18" viewBox="0 0 22 18">
            <rect x="1" y="1" width="20" height="16" rx="1" fill="#fff" stroke="#5a5f6c" strokeWidth="2" />
            <rect x="7" y="6" width="8" height="5" fill="#9fb2cc" stroke="#5a5f6c" strokeWidth="2" />
          </svg>
        </button>
        <button aria-label="Close" className={`${captionButton} border-[#5c1f1c] bg-[linear-gradient(#dd9a8c_45%,#b03c28_45%,#cc6a50)]`}>
          <svg width="22" height="18" viewBox="0 0 22 18">
            <path d="M3 2l16 14M19 2L3 16" stroke="#6a3a3a" strokeWidth="7" />
            <path d="M3 2l16 14M19 2L3 16" stroke="#fff" strokeWidth="4" />
          </svg>
        </button>
      </div>
    </header>
    <div className="mx-[15px] mb-4 border-2 border-t-[#808080] border-l-[#808080] border-r-white border-b-white">
      <PriceChart />
    </div>
  </section>
);

/* ---------- terminal ---------- */

const Terminal = () => (
  <section className="flex h-[377px] border-t-2 border-[#a0a0a0] shadow-[inset_0_2px_0_#fff]">
    <div className="flex flex-col items-center w-[29px] pr-[2px] pb-[5px]">
      <button aria-label="Close" className="h-9 pt-1 flex items-center pr-[2px]">
        <CloseMark />
      </button>
      <div className="flex-1 w-full flex items-center bg-gradient-to-b from-[#d7e2f1] to-[#c3cfe0]">
        <h2 className={`${small} self-end rotate-180 pt-1 text-[22px] leading-[27px] [writing-mode:vertical-rl]`}>
          Terminal
        </h2>
      </div>
    </div>
    <div className="flex-1 flex flex-col mt-[9px] mr-[4px] border-t-2 border-l-2 border-[#a0a0a0]">
      <div className="flex-1 bg-white">
        <table className="w-full table-fixed border-collapse text-[22px]">
          <thead>
            <tr className="h-[49px]">
              {orderColumns.map((c, i) => (
                <th
                  key={i}
                  className={`${c.width} px-[10px] font-normal border-r-2 border-[#e5e5e5] ${
                    i === 0 ? "text-left" : "text-right"
                  }`}
                >
                  {c.label}
                  {i === 0 && <span className="pl-6 text-[16px] text-[#606060]">/</span>}
                </th>
              ))}
            </tr>
          </thead>
          <tbody>
            <tr className="h-10 bg-[#c8c8c8] border-y-2 border-[#d4d4d4] font-bold text-[23px] leading-8">
              <td colSpan={11} className="pl-3">
                <div className="flex items-center gap-[14px] pb-[3px] whitespace-pre">
                  <svg width="18" height="18" viewBox="0 0 18 18" fill="none" aria-hidden="true">
                    <circle cx="9" cy="11" r="6" fill="#dcdcdc" stroke="#7c7c7c" strokeWidth="2" />
                    <path d="M6 14l6-6" stroke="#7c7c7c" strokeWidth="2" />
                  </svg>
                  {"Balance: 50 000.00 USD  Equity: 50 000.00  Free margin: 50 000.00"}
                </div>
              </td>
              <td className="pr-2 pb-[3px] text-right">0.00</td>
            </tr>
          </tbody>
        </table>
      </div>
      <div role="tablist" className="flex h-[50px] pl-1 border-t-[3px] border-black text-[23px]">
        <button
          role="tab"
          aria-selected="true"
          className="-mt-[3px] h-[42px] px-4 pb-[2px] leading-8 bg-white border-x-2 border-b-[3px] border-black"
        >
          Trade
        </button>
        {terminalTabs.map((t) => (
          <div key={t.label} className="flex">
            <button role="tab" aria-selected="false" className="flex h-9 pl-[19px] pr-[17px] leading-[34px] text-[#808080]">
              {t.label}
              {t.count && <span className="pl-1 pt-[9px] text-[18px] font-bold text-[#e03030]">{t.count}</span>}
            </button>
            <div className="w-[2px] h-7 mt-2 bg-[#808080]" />
          </div>
        ))}
      </div>
    </div>
  </section>
);

const StatusBar = () => (
  <footer className="flex items-end h-[45px] border-t-2 border-[#a0a0a0] shadow-[inset_0_2px_0_#fff] text-[21px] leading-9">
    <p className="flex-1 pl-[3px] text-[22px]">For Help, press F1</p>
    {status.map((s) => (
      <p key={s.label} className={`${s.width} h-9 pl-[10px] border-l-2 border-[#a0a0a0] whitespace-nowrap`}>
        {s.label}
      </p>
    ))}
    <p className="w-[294px] flex items-center gap-2 h-9 pl-[10px] border-l-2 border-[#a0a0a0]">
      <svg width="48" height="27" viewBox="0 0 48 27" aria-hidden="true">
        {Array.from({ length: 8 }, (_, i) => (
          <g key={i}>
            <rect x={i * 6} y="0" width="4" height={19 - i * 2} fill="#5f7a1f" />
            <rect x={i * 6} y={21 - i * 2} width="4" height={6 + i * 2} fill="#16365c" />
          </g>
        ))}
      </svg>
      13/1 kb
    </p>
  </footer>
);

const App = () => (
  <div className={`${ui} flex flex-col h-screen bg-[#f0f0f0] text-black overflow-hidden`}>
    <nav className="flex items-center gap-[35px] h-10 pl-3 pb-[2px] text-[23px]">
      {menu.map((item) => (
        <button key={item}>{item}</button>
      ))}
    </nav>
    <Toolbars />
    <main className="flex flex-1 min-h-0 border-t-2 border-[#808080]">
      <aside className="flex flex-col w-[494px] border-r-[3px] border-[#808080]">
        <MarketWatch />
        <Navigator />
      </aside>
      <div className="relative flex-1 bg-[#ababab] overflow-hidden">
        <ChartWindow />
      </div>
    </main>
    <Terminal />
    <StatusBar />
  </div>
);

export default App;
